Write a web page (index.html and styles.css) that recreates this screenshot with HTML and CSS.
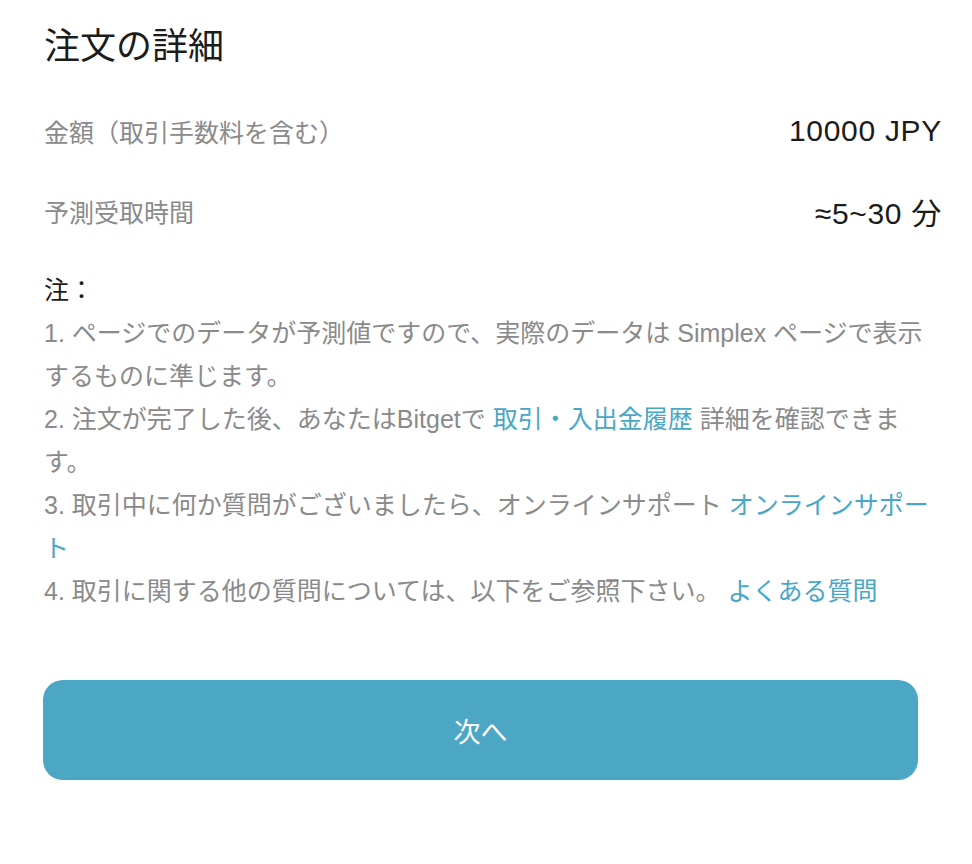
FILE: index.html
```html
<!DOCTYPE html>
<html lang="ja">
<head>
<meta charset="utf-8">
<title>注文の詳細</title>
<link rel="stylesheet" href="styles.css">
</head>
<body>
<div class="page">
  <h1 class="title">注文の詳細</h1>
  <div class="rows">
    <div class="row">
      <span class="label">金額（取引手数料を含む）</span>
      <span class="value">10000 JPY</span>
    </div>
    <div class="row">
      <span class="label">予測受取時間</span>
      <span class="value">≈5~30 分</span>
    </div>
  </div>
  <div class="notes">
    <p class="notes-head">注：</p>
    <p>1. ページでのデータが予測値ですので、実際のデータは Simplex ページで表示するものに準じます。</p>
    <p>2. 注文が完了した後、あなたはBitgetで <a class="link" href="#">取引・入出金履歴</a> 詳細を確認できます。</p>
    <p>3. 取引中に何か質問がございましたら、オンラインサポート <a class="link" href="#">オンラインサポート</a></p>
    <p>4. 取引に関する他の質問については、以下をご参照下さい。 <a class="link" href="#">よくある質問</a></p>
  </div>
  <button class="next" type="button">次へ</button>
</div>
</body>
</html>
```

FILE: styles.css
```css
* { box-sizing: border-box; }
html, body { margin: 0; padding: 0; background: #ffffff; }
body {
  font-family: "Liberation Sans", "Noto Sans CJK JP", sans-serif;
  color: #1c1c1c;
}
.page {
  width: 972px;
  padding: 23px 30px 0 44px;
}
.title {
  margin: 0;
  font-size: 36px;
  line-height: 48px;
  font-weight: 400;
  color: #1c1c1c;
}
.rows {
  margin-top: 40px;
  display: flex;
  flex-direction: column;
  gap: 40px;
}
.row {
  display: flex;
  justify-content: space-between;
  align-items: center;
  height: 40px;
}
.label {
  font-size: 25px;
  color: #8a8a8a;
}
.value {
  font-size: 30px;
  letter-spacing: 0.7px;
  color: #1c1c1c;
}
.notes {
  margin-top: 38px;
  font-size: 25px;
  line-height: 43px;
  color: #8a8a8a;
}
.notes p { margin: 0; }
.notes .notes-head { color: #1c1c1c; }
.link {
  color: #4aa6c6;
  text-decoration: none;
}
.next {
  display: block;
  margin-top: 67px;
  width: 875px;
  height: 100px;
  margin-left: -1px;
  border: none;
  border-radius: 20px;
  background: #4ca7c5;
  color: #ffffff;
  font-family: "Liberation Sans", "Noto Sans CJK JP", sans-serif;
  font-size: 27px;
  cursor: pointer;
}
```
